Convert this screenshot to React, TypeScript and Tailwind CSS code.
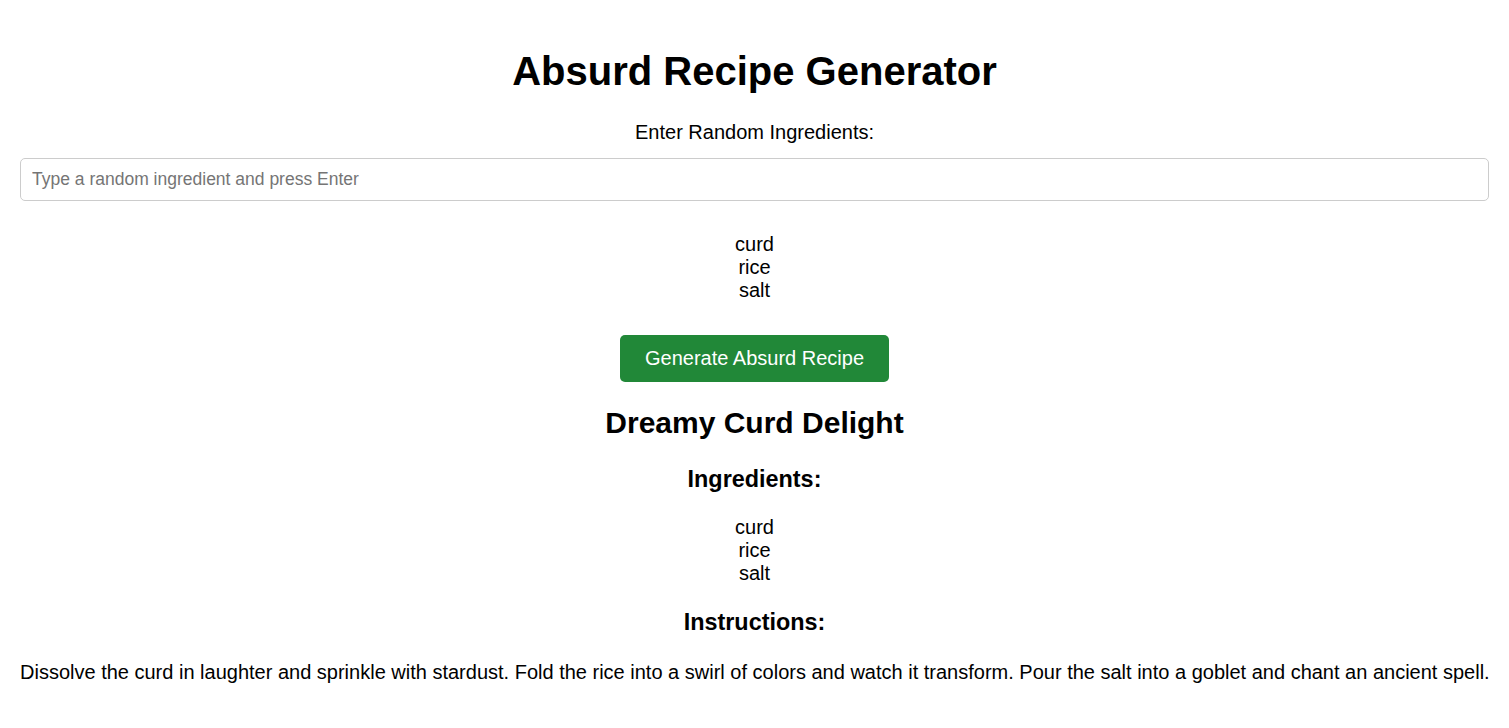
import { useState } from 'react';

const ingredients = ['curd', 'rice', 'salt'];

export default function App() {
  const [value, setValue] = useState('');

  return (
    <div className="min-h-screen bg-white p-[20px] text-center text-[20px] text-black [font-family:'Liberation_Sans',Arial,sans-serif]">
      <h1 className="mt-[28px] text-[40px] font-bold leading-[46px]">Absurd Recipe Generator</h1>

      <label className="mt-[27px] block leading-[23px]">Enter Random Ingredients:</label>
      <input
        value={value}
        onChange={(e) => setValue(e.target.value)}
        placeholder="Type a random ingredient and press Enter"
        className="mt-[14px] block h-[43px] w-full rounded-[5px] border border-[#cccccc] px-[11px] text-[17.5px] outline-none placeholder:text-[#757575]"
      />

      {/* Entered ingredients */}
      <ul className="mt-[32px] leading-[23px]">
        {ingredients.map((item) => (
          <li key={item}>{item}</li>
        ))}
      </ul>

      <button className="mt-[33px] h-[47px] rounded-[5px] bg-[#218838] px-[25px] text-[20px] leading-[23px] text-white">
        Generate Absurd Recipe
      </button>

      {/* Generated recipe */}
      <h2 className="mt-[23px] text-[30px] font-bold leading-[35px]">Dreamy Curd Delight</h2>

      <h3 className="mt-[26px] text-[23.4px] font-bold leading-[27px]">Ingredients:</h3>
      <ul className="mt-[23px] leading-[23px]">
        {ingredients.map((item) => (
          <li key={item}>{item}</li>
        ))}
      </ul>

      <h3 className="mt-[24px] text-[23.4px] font-bold leading-[27px]">Instructions:</h3>
      <p className="mt-[25px] whitespace-nowrap leading-[23px]">
        Dissolve the curd in laughter and sprinkle with stardust. Fold the rice into a swirl of colors and watch it
        transform. Pour the salt into a goblet and chant an ancient spell.
      </p>
    </div>
  );
}
